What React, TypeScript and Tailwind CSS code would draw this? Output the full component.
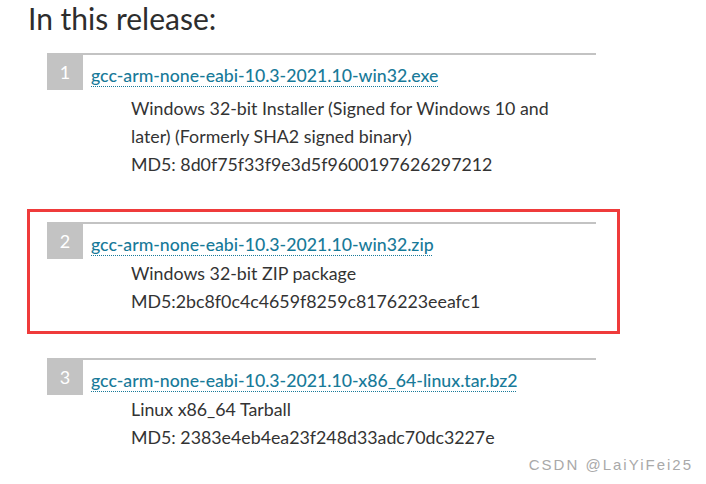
const releases = [
  {
    n: "1",
    file: "gcc-arm-none-eabi-10.3-2021.10-win32.exe",
    lines: ["Windows 32-bit Installer (Signed for Windows 10 and later) (Formerly SHA2 signed binary)", "MD5: 8d0f75f33f9e3d5f9600197626297212"],
    gap: "mt-[4px]",
  },
  {
    n: "2",
    file: "gcc-arm-none-eabi-10.3-2021.10-win32.zip",
    lines: ["Windows 32-bit ZIP package", "MD5:2bc8f0c4c4659f8259c8176223eeafc1"],
    gap: "mt-0",
  },
  {
    n: "3",
    file: "gcc-arm-none-eabi-10.3-2021.10-x86_64-linux.tar.bz2",
    lines: ["Linux x86_64 Tarball", "MD5: 2383e4eb4ea23f248d33adc70dc3227e"],
    gap: "mt-0",
  },
];

type Release = (typeof releases)[number];

function Item({ r }: { r: Release }) {
  return (
    <div className="w-[549px] border-t-2 border-[#c3c3c3]">
      <div className="flex items-start">
        <span className="flex h-[35px] w-[36px] items-center justify-center bg-[#c3c3c3] text-[18px] text-white">
          {r.n}
        </span>
        <a
          href="#"
          className="ml-[8px] pt-[11px] text-[17.7px] font-medium leading-[20px] text-[#187a99] underline decoration-dotted decoration-1 underline-offset-[4px]"
        >
          {r.file}
        </a>
      </div>
      <div className={`${r.gap} w-[515px] pl-[84px] text-[17.8px] leading-[28px] text-[#333]`}>
        {r.lines.map((l) => (
          <p key={l}>{l}</p>
        ))}
      </div>
    </div>
  );
}

export default function App() {
  return (
    <div className="relative h-[484px] w-[706px] overflow-hidden bg-white font-['Lato',sans-serif]">
      <h2 className="ml-[28px] text-[30px] leading-[36px] text-[#2d2d2d]">In this release:</h2>

      <div className="ml-[27px] mt-[17px] w-[593px]">
        <div className="ml-[20px]">
          <Item r={releases[0]} />
        </div>

        {/* highlighted one */}
        <div className="mt-[31px] border-[3px] border-[#ef3b3b] pb-[16px] pl-[17px] pt-[10px]">
          <Item r={releases[1]} />
        </div>

        <div className="ml-[20px] mt-[24px]">
          <Item r={releases[2]} />
        </div>
      </div>

      <span className="absolute bottom-[8px] right-[13px] font-['Liberation_Sans',sans-serif] text-[15px] tracking-[2px] text-[#a9a9a9]">
        CSDN @LaiYiFei25
      </span>
    </div>
  );
}
